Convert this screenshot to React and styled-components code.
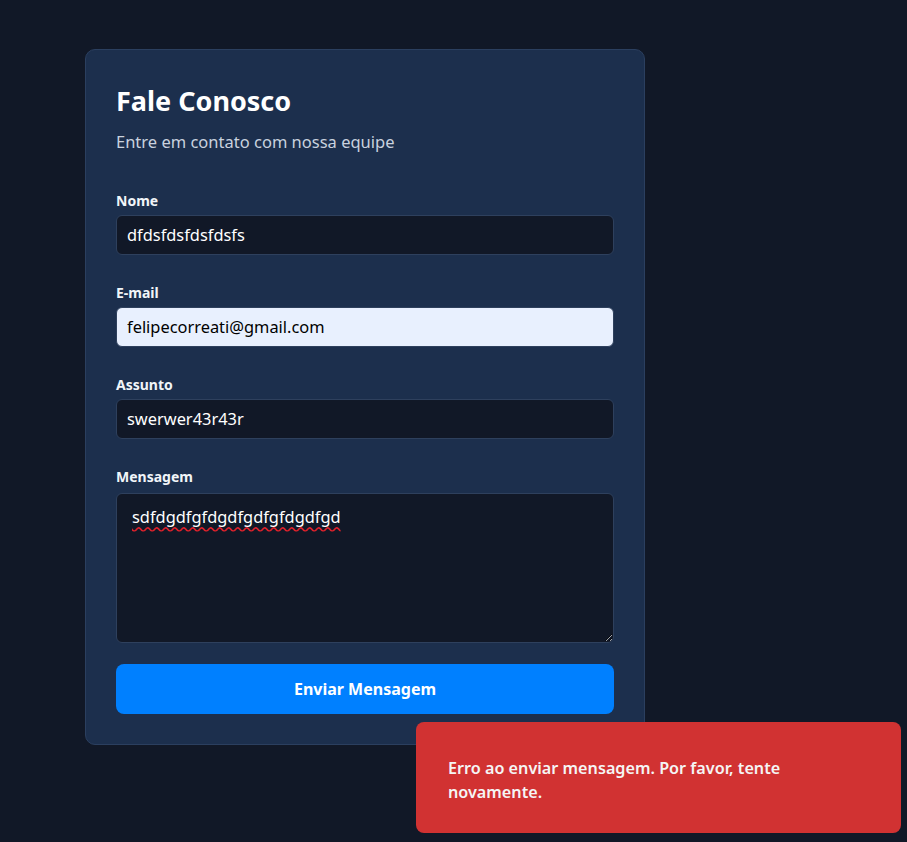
import styled, { createGlobalStyle } from "styled-components"

const GlobalStyle = createGlobalStyle`
    * {
        box-sizing: border-box;
    }
    html, body {
        margin: 0;
        background: #111827;
        font-family: "Segoe UI", "Noto Sans", sans-serif;
    }
`

const Page = styled.main`
    min-height: 842px;
    padding: 49px 0 0 85px;
`

const Card = styled.form`
    width: 560px;
    padding: 32px 30px 30px;
    background: #1c2f4d;
    border: 1px solid #2b3f5f;
    border-radius: 10px;
    display: flex;
    flex-direction: column;
`

const Title = styled.h1`
    margin: 0;
    color: #ffffff;
    font-size: 27px;
    font-weight: 700;
    line-height: 1.4;
`

const Subtitle = styled.p`
    margin: 10px 0 38px;
    color: #c9d2df;
    font-size: 16.5px;
    line-height: 1.4;
`

const Field = styled.div`
    display: flex;
    flex-direction: column;
    gap: 4px;
    margin-bottom: 28px;
    &:last-of-type {
        gap: 6px;
        margin-bottom: 21px;
    }
`

const Label = styled.label`
    color: #f1f5f9;
    font-size: 14px;
    font-weight: 700;
    line-height: 20px;
`

const Input = styled.input`
    height: 40px;
    padding: 0 10px;
    border: 1px solid #2e405d;
    border-radius: 6px;
    background: ${p => (p.$autofill ? "#e8f0fe" : "#111827")};
    color: ${p => (p.$autofill ? "#000000" : "#ffffff")};
    font-family: inherit;
    font-size: 16.4px;
    outline: none;
`

const TextArea = styled.textarea`
    height: 150px;
    padding: 12px 15px;
    border: 1px solid #2e405d;
    border-radius: 6px;
    background: #111827;
    color: #ffffff;
    font-family: inherit;
    font-size: 16.4px;
    line-height: 1.4;
    outline: none;
    text-decoration: underline wavy #e0202a;
    text-decoration-skip-ink: none;
    text-underline-offset: 3px;
`

const Submit = styled.button`
    height: 50px;
    border: 0;
    border-radius: 8px;
    background: #0080ff;
    color: #ffffff;
    font-family: inherit;
    font-size: 16px;
    font-weight: 700;
`

const Toast = styled.div`
    position: fixed;
    right: 6px;
    bottom: 9px;
    width: 485px;
    height: 111px;
    padding: 34px 32px 0;
    border-radius: 8px;
    background: #d13232;
    color: #f5f5f5;
    font-size: 16.2px;
    font-weight: 600;
    line-height: 24px;
`

export default function App() {
    return (
        <Page>
            <GlobalStyle />
            <Card onSubmit={e => e.preventDefault()}>
                <Title>Fale Conosco</Title>
                <Subtitle>Entre em contato com nossa equipe</Subtitle>
                <Field>
                    <Label htmlFor="nome">Nome</Label>
                    <Input id="nome" defaultValue="dfdsfdsfdsfdsfs" />
                </Field>
                <Field>
                    <Label htmlFor="email">E-mail</Label>
                    <Input id="email" $autofill defaultValue="felipecorreati@gmail.com" />
                </Field>
                <Field>
                    <Label htmlFor="assunto">Assunto</Label>
                    <Input id="assunto" defaultValue="swerwer43r43r" />
                </Field>
                <Field>
                    <Label htmlFor="mensagem">Mensagem</Label>
                    <TextArea id="mensagem" defaultValue="sdfdgdfgfdgdfgdfgfdgdfgd" />
                </Field>
                <Submit type="submit">Enviar Mensagem</Submit>
            </Card>
            <Toast>Erro ao enviar mensagem. Por favor, tente novamente.</Toast>
        </Page>
    )
}
